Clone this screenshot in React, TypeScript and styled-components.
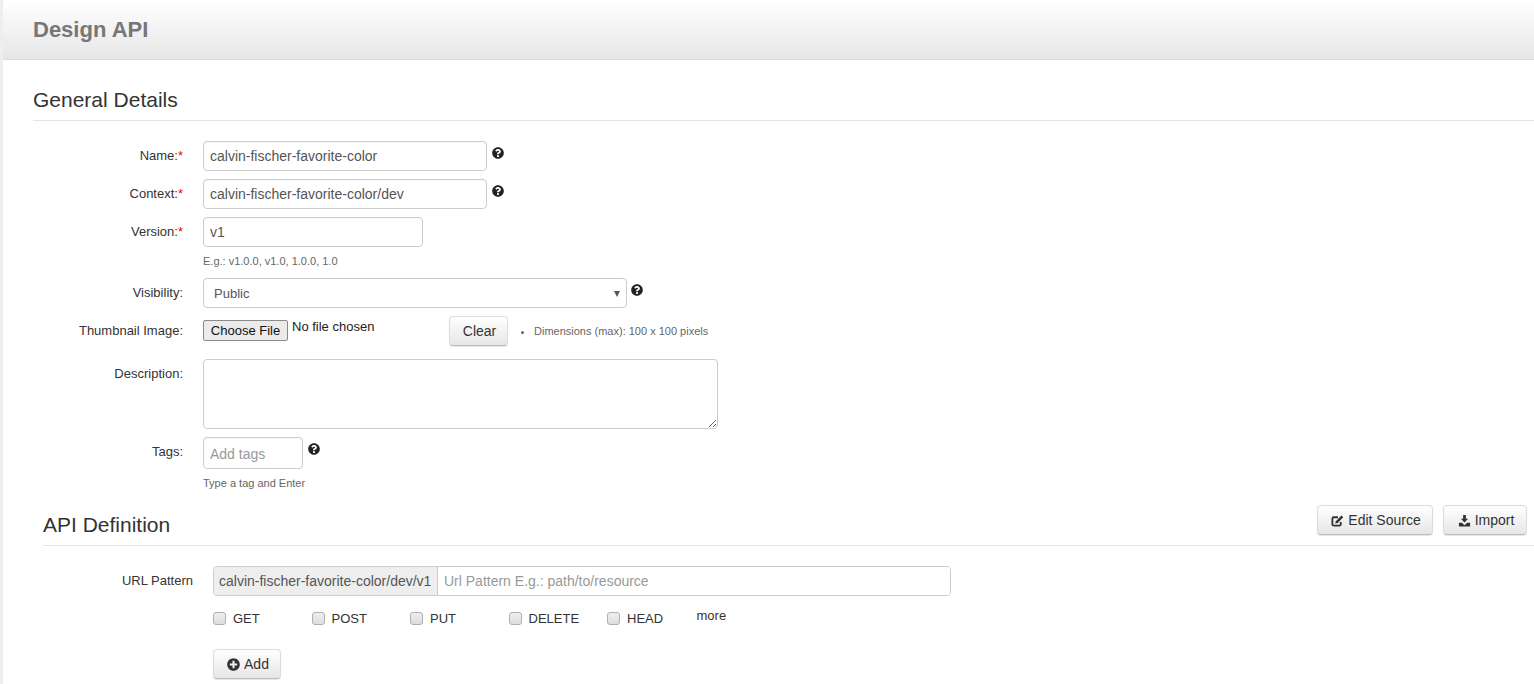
import React from 'react'
import styled, { createGlobalStyle } from 'styled-components'
import { FaPlusCircle, FaQuestionCircle } from 'react-icons/fa'

const GlobalStyle = createGlobalStyle`
  html, body {
    margin: 0;
    height: 684px;
    overflow: hidden;
    background: #fff;
  }

  body {
    font-family: "Liberation Sans", Arial, sans-serif;
    font-size: 14px;
    color: #333;
  }

  * {
    box-sizing: border-box;
  }
`

const Page = styled.div`
  height: 684px;
  overflow: hidden;
  border-left: 3px solid #eee;
`

const Header = styled.header`
  display: flex;
  align-items: center;
  height: 60px;
  padding: 0 0 0 30px;
  background: linear-gradient(to bottom, #fff 0%, #e6e6e6 100%);
  border-bottom: 1px solid #ddd;
`

const PageTitle = styled.h1`
  margin: 0;
  font-size: 22px;
  font-weight: 700;
  color: #777;
`

const Content = styled.main`
  padding: 26px 0 0 30px;
`

const SectionHeader = styled.div<{ $inset?: number }>`
  display: flex;
  justify-content: space-between;
  align-items: flex-end;
  margin-left: ${p => p.$inset ?? 0}px;
  border-bottom: 1px solid #e5e5e5;
`

const SectionTitle = styled.h2`
  margin: 0;
  font-size: 21px;
  font-weight: 400;
  line-height: 28px;
  padding-bottom: 6px;
  color: #333;
`

const Form = styled.div`
  padding-top: 20px;
`

const Row = styled.div<{ $gap?: number }>`
  display: flex;
  align-items: flex-start;
  margin-bottom: ${p => p.$gap ?? 8}px;
`

const Label = styled.div`
  flex: none;
  width: 150px;
  padding-top: 6px;
  margin-right: 20px;
  text-align: right;
  font-size: 13px;
  line-height: 18px;
  color: #333;
`

const Required = styled.span`
  color: #f00;
`

const Field = styled.div`
  flex: none;
`

const Input = styled.input<{ $width: number; $height?: number }>`
  display: block;
  width: ${p => p.$width}px;
  height: ${p => p.$height ?? 30}px;
  padding: ${p => (p.$height ? '2px' : '0')} 6px 0;
  border: 1px solid #ccc;
  border-radius: 4px;
  outline: none;
  background: #fff;
  font-family: inherit;
  font-size: 14px;
  color: #555;
  box-shadow: inset 0 1px 1px rgba(0, 0, 0, 0.03);

  &::placeholder {
    color: #999;
    opacity: 1;
  }
`

const HelpIcon = styled(FaQuestionCircle)<{ $left?: number }>`
  flex: none;
  width: 12px;
  height: 12px;
  margin: 6px 0 0 ${p => p.$left ?? 5}px;
  color: #222;
`

const HelpText = styled.div`
  width: 0;
  margin-top: 8px;
  font-size: 11px;
  line-height: 13px;
  color: #666;
  white-space: nowrap;
`

const SelectWrap = styled.div`
  position: relative;
  width: 424px;
  height: 30px;

  &::after {
    content: '';
    position: absolute;
    right: 7px;
    top: 13px;
    border-left: 3px solid transparent;
    border-right: 3px solid transparent;
    border-top: 6px solid #555;
  }
`

const Select = styled.select`
  appearance: none;
  display: block;
  width: 100%;
  height: 100%;
  padding: 0 10px;
  border: 1px solid #ccc;
  border-radius: 4px;
  background: #fff;
  font-family: inherit;
  font-size: 13px;
  color: #555;
`

const FileRow = styled.div`
  display: flex;
  align-items: flex-start;
  width: 515px;
`

const FileButton = styled.button`
  width: 85px;
  height: 21px;
  margin-top: 4px;
  padding: 0;
  border: 1px solid #8a8a8a;
  border-radius: 2px;
  background: #ebebeb;
  font-family: inherit;
  font-size: 13px;
  color: #111;
`

const FileName = styled.span`
  width: 161px;
  padding: 3px 0 0 4px;
  font-size: 13px;
  line-height: 15px;
  color: #222;
`

const Button = styled.button<{ $width: number }>`
  display: inline-flex;
  align-items: center;
  justify-content: center;
  gap: 4px;
  width: ${p => p.$width}px;
  height: 30px;
  padding: 0 0 0 2px;
  border: 1px solid #ddd;
  border-bottom-color: #bbb;
  border-radius: 4px;
  background: linear-gradient(to bottom, #fff 0%, #e6e6e6 100%);
  box-shadow: 0 1px 1px rgba(0, 0, 0, 0.1);
  font-family: inherit;
  font-size: 14px;
  color: #333;

  svg {
    width: 13px;
    height: 13px;
    color: #333;
  }
`

const Bullet = styled.ul`
  margin: 0 0 0 12px;
  padding: 8px 0 0 14px;
  font-size: 11px;
  line-height: 14px;
  color: #666;
  white-space: nowrap;
`

const TextArea = styled.textarea`
  display: block;
  width: 515px;
  height: 70px;
  border: 1px solid #ccc;
  border-radius: 4px;
  outline: none;
`

const HeaderActions = styled.div`
  display: flex;
  align-self: flex-start;
  gap: 10px;
  margin: 0 7px 10px 0;
`

const ApiSection = styled.section`
  margin-top: 15px;
`

const ApiBody = styled.div`
  padding: 20px 0 0 10px;
`

const InputGroup = styled.div`
  display: flex;
  width: 738px;
  height: 30px;
  border: 1px solid #ccc;
  border-radius: 4px;
  overflow: hidden;
`

const Addon = styled.span`
  flex: none;
  width: 224px;
  padding-left: 5px;
  border-right: 1px solid #ccc;
  background: #eee;
  font-size: 14px;
  line-height: 28px;
  color: #555;
  white-space: nowrap;
`

const GroupInput = styled.input`
  flex: 1;
  min-width: 0;
  padding: 0 6px;
  border: 0;
  outline: none;
  font-family: inherit;
  font-size: 14px;

  &::placeholder {
    color: #999;
    opacity: 1;
  }
`

const Methods = styled.div`
  display: flex;
  align-items: flex-start;
  margin: 13px 0 22px;
`

const Method = styled.label`
  display: flex;
  align-items: center;
  width: 98.5px;
  height: 18px;
  font-size: 13px;
  color: #333;
`

const Check = styled.input`
  appearance: none;
  width: 13px;
  height: 13px;
  margin: 0 7px 0 0;
  border: 1px solid #b0b0b0;
  border-radius: 3px;
  background: linear-gradient(to bottom, #eee, #ddd);
`

const More = styled.span`
  margin: -2px 0 0 -9px;
  font-size: 13px;
  line-height: 18px;
  color: #333;
`

const EditIcon = () => (
  <svg viewBox="0 0 14 14" aria-hidden="true">
    <path
      d="M10.5 8.5V11a1.5 1.5 0 0 1-1.5 1.5H3A1.5 1.5 0 0 1 1.500 11V5A1.500 1.500 0 0 1 3 3.500h4.500"
      fill="none"
      stroke="currentColor"
      strokeWidth="2"
    />
    <path d="M11.200 1.500l2 2-6 6.300-2.600.600.600-2.600z" fill="currentColor" />
  </svg>
)

const ImportIcon = () => (
  <svg viewBox="0 0 14 14" aria-hidden="true">
    <path d="M5.500 1h3v4H11L7 9.200 3 5h2.500z" fill="currentColor" />
    <path d="M1 9.500h3.200L7 12l2.800-2.500H13V13.500H1z" fill="currentColor" />
  </svg>
)

const methods = ['GET', 'POST', 'PUT', 'DELETE', 'HEAD']

export default function App() {
  return (
    <>
      <GlobalStyle />
      <Page>
        <Header>
          <PageTitle>Design API</PageTitle>
        </Header>
        <Content>
          <SectionHeader>
            <SectionTitle>General Details</SectionTitle>
          </SectionHeader>
          <Form>
            <Row>
              <Label>Name:<Required>*</Required></Label>
              <Field><Input $width={284} defaultValue="calvin-fischer-favorite-color" /></Field>
              <HelpIcon />
            </Row>
            <Row>
              <Label>Context:<Required>*</Required></Label>
              <Field><Input $width={284} defaultValue="calvin-fischer-favorite-color/dev" /></Field>
              <HelpIcon />
            </Row>
            <Row $gap={10}>
              <Label>Version:<Required>*</Required></Label>
              <Field>
                <Input $width={220} defaultValue="v1" />
                <HelpText>E.g.: v1.0.0, v1.0, 1.0.0, 1.0</HelpText>
              </Field>
            </Row>
            <Row>
              <Label>Visibility:</Label>
              <Field>
                <SelectWrap>
                  <Select defaultValue="Public">
                    <option>Public</option>
                  </Select>
                </SelectWrap>
              </Field>
              <HelpIcon $left={4} />
            </Row>
            <Row $gap={13}>
              <Label>Thumbnail Image:</Label>
              <FileRow>
                <FileButton type="button">Choose File</FileButton>
                <FileName>No file chosen</FileName>
                <Button $width={59}>Clear</Button>
                <Bullet><li>Dimensions (max): 100 x 100 pixels</li></Bullet>
              </FileRow>
            </Row>
            <Row>
              <Label>Description:</Label>
              <Field><TextArea /></Field>
            </Row>
            <Row $gap={0}>
              <Label>Tags:</Label>
              <Field>
                <Input $width={100} $height={32} placeholder="Add tags" />
                <HelpText>Type a tag and Enter</HelpText>
              </Field>
              <HelpIcon />
            </Row>
          </Form>
          <ApiSection>
            <SectionHeader $inset={10}>
              <SectionTitle>API Definition</SectionTitle>
              <HeaderActions>
                <Button $width={116}><EditIcon />Edit Source</Button>
                <Button $width={84}><ImportIcon />Import</Button>
              </HeaderActions>
            </SectionHeader>
            <ApiBody>
              <Row $gap={0}>
                <Label>URL Pattern</Label>
                <Field>
                  <InputGroup>
                    <Addon>calvin-fischer-favorite-color/dev/v1</Addon>
                    <GroupInput placeholder="Url Pattern E.g.: path/to/resource" />
                  </InputGroup>
                  <Methods>
                    {methods.map(m => (
                      <Method key={m}><Check type="checkbox" />{m}</Method>
                    ))}
                    <More>more</More>
                  </Methods>
                  <Button $width={68}><FaPlusCircle />Add</Button>
                </Field>
              </Row>
            </ApiBody>
          </ApiSection>
        </Content>
      </Page>
    </>
  )
}
